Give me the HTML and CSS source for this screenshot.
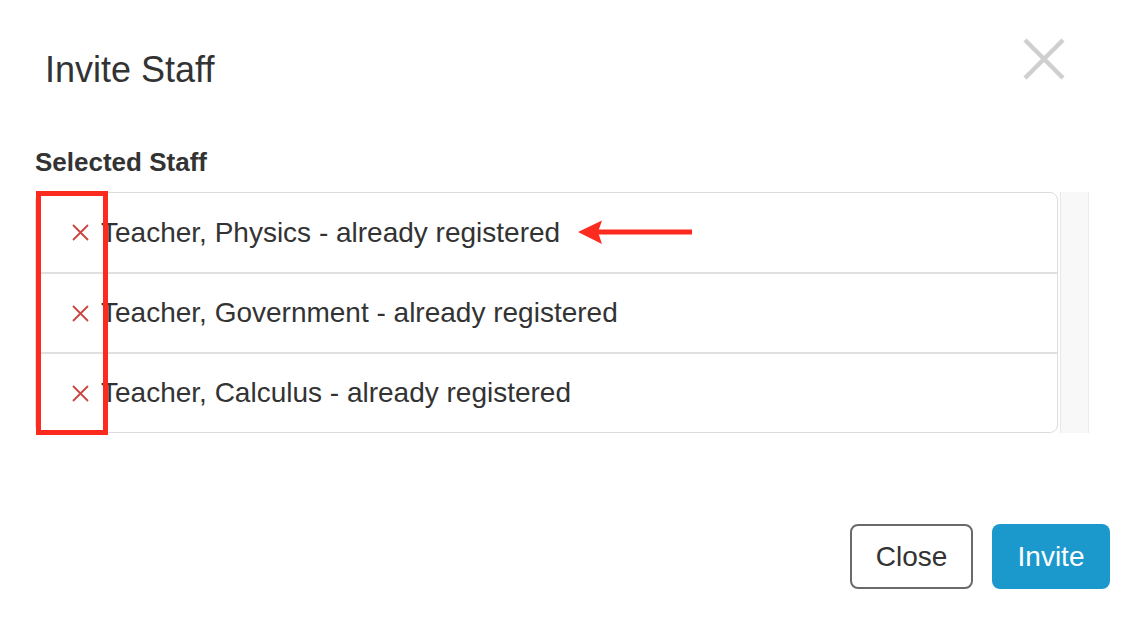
FILE: index.html
```html
<!DOCTYPE html>
<html>
<head>
<meta charset="utf-8">
<link rel="stylesheet" href="styles.css">
</head>
<body>
<div class="modal">
  <div class="modal-header">
    <h4 class="modal-title">Invite Staff</h4>
    <button class="close" aria-label="Close">
      <svg width="42" height="42" viewBox="0 0 42 42"><path d="M2 2 L40 40 M40 2 L2 40" stroke="#cfcfcf" stroke-width="4.5" fill="none"/></svg>
    </button>
  </div>
  <div class="modal-body">
    <div class="label">Selected Staff</div>
    <div class="list-wrap">
      <ul class="list">
        <li class="row"><span class="remove"><svg width="17" height="17" viewBox="0 0 17 17"><path d="M1 1 L16 16 M16 1 L1 16" stroke="#c9453f" stroke-width="1.8" fill="none"/></svg></span><span class="name">Teacher, Physics - already registered</span></li>
        <li class="row"><span class="remove"><svg width="17" height="17" viewBox="0 0 17 17"><path d="M1 1 L16 16 M16 1 L1 16" stroke="#c9453f" stroke-width="1.8" fill="none"/></svg></span><span class="name">Teacher, Government - already registered</span></li>
        <li class="row"><span class="remove"><svg width="17" height="17" viewBox="0 0 17 17"><path d="M1 1 L16 16 M16 1 L1 16" stroke="#c9453f" stroke-width="1.8" fill="none"/></svg></span><span class="name">Teacher, Calculus - already registered</span></li>
      </ul>
      <div class="scroll-track"></div>
      <div class="annot-box"></div>
      <svg class="annot-arrow" width="118" height="28" viewBox="0 0 118 28"><polygon points="2,13 26,1.5 22,13 26,25" fill="#fc2b1f"/><rect x="22" y="10.5" width="94" height="5" fill="#fc2b1f"/></svg>
    </div>
  </div>
  <div class="modal-footer">
    <button class="btn btn-default">Close</button>
    <button class="btn btn-primary">Invite</button>
  </div>
</div>
</body>
</html>
```

FILE: styles.css
```css
html, body {
  margin: 0;
  padding: 0;
  background: #fff;
}
body {
  font-family: "Liberation Sans", Arial, Helvetica, sans-serif;
  color: #333;
  width: 1136px;
  height: 620px;
  overflow: hidden;
}
.modal-header {
  display: flex;
  justify-content: space-between;
  align-items: flex-start;
  padding: 38px 71px 0 45px;
}
.modal-title {
  margin: 12px 0 0 0;
  font-size: 36px;
  font-weight: normal;
  line-height: 40px;
  color: #333;
}
.close {
  border: 0;
  background: none;
  padding: 0;
  margin: 0;
  width: 42px;
  height: 42px;
  display: block;
}
.close svg { display: block; }
.modal-body {
  padding: 0 0 0 35px;
}
.label {
  margin-top: 57px;
  font-size: 26px;
  font-weight: bold;
  line-height: 30px;
  margin-bottom: 15px;
}
.list-wrap {
  position: relative;
  display: flex;
  gap: 2px;
  width: 1054px;
}
.list {
  list-style: none;
  margin: 0;
  padding: 0;
  width: 1023px;
  box-sizing: border-box;
  border: 1px solid #dcdcdc;
  border-radius: 8px;
}
.row {
  display: flex;
  align-items: center;
  height: 79px;
  padding-left: 36px;
  font-size: 28px;
}
.row + .row {
  border-top: 2px solid #e0e0e0;
  height: 78px;
}
.remove {
  width: 17px;
  height: 17px;
  margin-right: 12px;
  display: block;
}
.remove svg { display: block; }
.scroll-track {
  width: 27px;
  background: #f8f8f8;
  border-left: 1px solid #e8e8e8;
  border-right: 1px solid #ececec;
}
.annot-box {
  position: absolute;
  left: 1px;
  top: -1px;
  width: 72px;
  height: 244px;
  box-sizing: border-box;
  border: 5px solid #fc2b1f;
}
.annot-arrow {
  position: absolute;
  left: 541px;
  top: 27px;
}
.modal-footer {
  display: flex;
  justify-content: flex-end;
  gap: 19px;
  padding: 91px 26px 0 0;
}
.btn {
  font-family: "Liberation Sans", Arial, Helvetica, sans-serif;
  font-size: 28px;
  height: 65px;
  border-radius: 8px;
  box-sizing: border-box;
  padding: 0;
  cursor: pointer;
}
.btn-default {
  width: 123px;
  background: #fff;
  color: #333;
  border: 2px solid #6a6a6a;
}
.btn-primary {
  width: 118px;
  background: #1b99cd;
  color: #fff;
  border: 0;
}
```
